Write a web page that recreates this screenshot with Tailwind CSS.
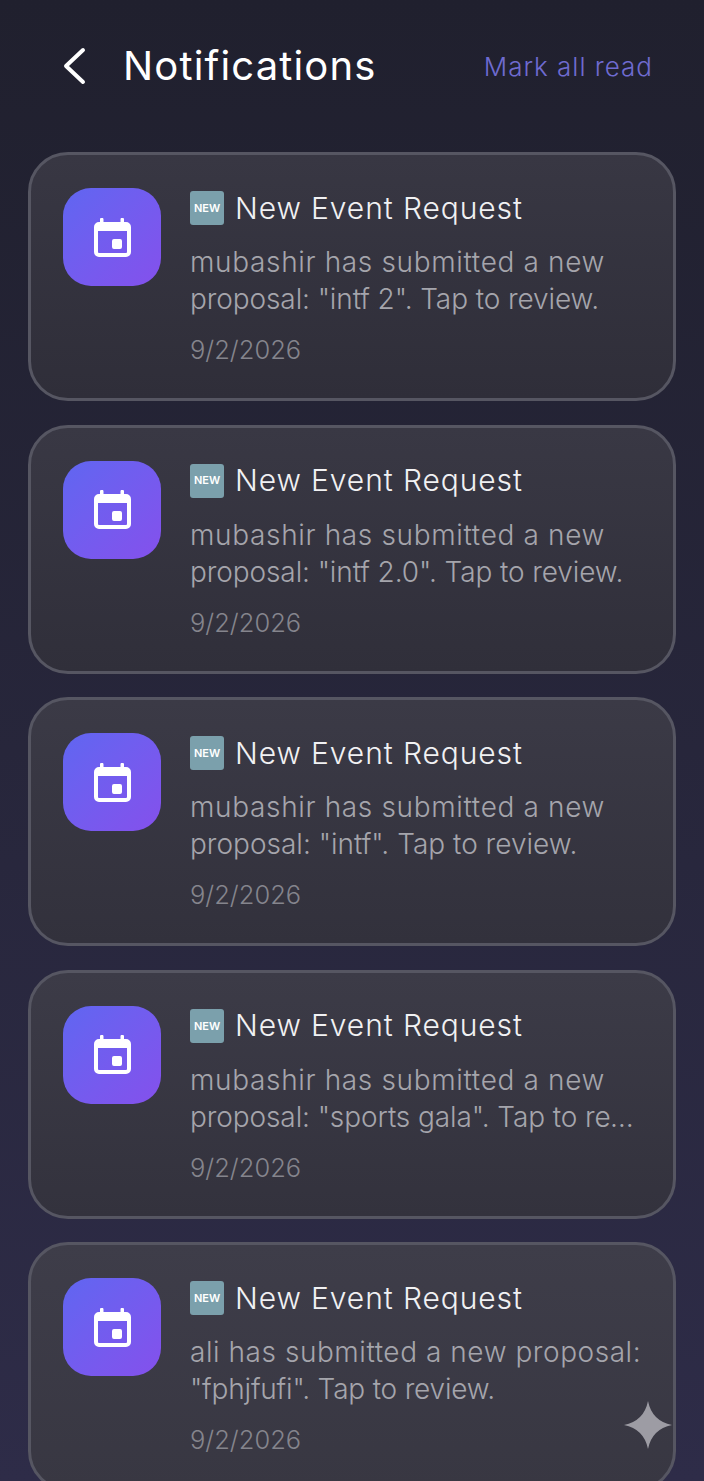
<!DOCTYPE html>
<html lang="en">
<head>
    <meta charset="UTF-8">
    <meta name="viewport" content="width=device-width, initial-scale=1.0">
    <title>Notifications</title>
    <script src="https://cdn.jsdelivr.net/npm/@tailwindcss/browser@4"></script>
</head>
<body class="relative h-[1481px] overflow-hidden bg-gradient-to-b from-[#20202e] to-[#2e2c48] font-['Inter','Noto_Sans',sans-serif]">
    <header class="flex h-[132px] items-center justify-between pl-[62px] pr-[51px]">
        <div class="flex items-center gap-[36px]">
            <svg class="h-[38px] w-[25px]" viewBox="0 0 25 38" fill="none" stroke="#fff" stroke-width="4" stroke-linecap="round" stroke-linejoin="round"><path d="M21 3 4 19l17 16"/></svg>
            <h1 class="text-[40px] font-normal tracking-[1.15px] text-white">Notifications</h1>
        </div>
        <button class="text-[26px] font-light tracking-[1px] text-[#6f6bd0]">Mark all read</button>
    </header>

    <main class="mt-[20px] flex flex-col gap-[23.600px] px-[28px]">
        <article class="flex h-[249px] shrink-0 gap-[29px] rounded-[40px] border-[3px] border-[#565662] bg-gradient-to-b from-[#383743] to-[#2f2e39] pl-[32px] pr-[20px] pt-[33px]">
            <div class="flex h-[98px] w-[98px] shrink-0 items-center justify-center rounded-[28px] bg-gradient-to-br from-[#5f66f1] to-[#8450ec]">
                <svg class="h-[39px] w-[37px]" viewBox="0 0 37 39"><path fill="#fff" fill-rule="evenodd" d="M6 4V1.500a1.500 1.500 0 0 1 3.500 0V4h17V1.500a1.500 1.500 0 0 1 3.500 0V4h2a5 5 0 0 1 5 5v25a5 5 0 0 1-5 5H5a5 5 0 0 1-5-5V9a5 5 0 0 1 5-5zM4 13v21a1 1 0 0 0 1 1h27a1 1 0 0 0 1-1V13zm16 8h6a2 2 0 0 1 2 2v6a2 2 0 0 1-2 2h-6a2 2 0 0 1-2-2v-6a2 2 0 0 1 2-2z"/></svg>
            </div>
            <div class="min-w-0 flex-1">
                <div class="flex h-[40px] items-center gap-[11px]">
                    <span class="flex h-[34px] w-[34px] items-center justify-center rounded-[3px] bg-[#7ba0ac] text-[11px] font-semibold text-white">NEW</span>
                    <h2 class="text-[30px] font-light tracking-[0.9px] text-[#f1f1f3]">New Event Request</h2>
                </div>
                <p class="mt-[16px] text-[28px] font-light leading-[37px] whitespace-nowrap text-[#a5a5ac]">
                    <span class="block tracking-[0.65px]">mubashir has submitted a new</span>
                    <span class="block tracking-[-0.1px]">proposal: "intf 2". Tap to review.</span>
                </p>
                <p class="mt-[13px] text-[25.500px] font-light text-[#85858d]">9/2/2026</p>
            </div>
        </article>
        <article class="flex h-[249px] shrink-0 gap-[29px] rounded-[40px] border-[3px] border-[#565662] bg-gradient-to-b from-[#393844] to-[#302f3a] pl-[32px] pr-[20px] pt-[33px]">
            <div class="flex h-[98px] w-[98px] shrink-0 items-center justify-center rounded-[28px] bg-gradient-to-br from-[#5f66f1] to-[#8450ec]">
                <svg class="h-[39px] w-[37px]" viewBox="0 0 37 39"><path fill="#fff" fill-rule="evenodd" d="M6 4V1.500a1.500 1.500 0 0 1 3.500 0V4h17V1.500a1.500 1.500 0 0 1 3.500 0V4h2a5 5 0 0 1 5 5v25a5 5 0 0 1-5 5H5a5 5 0 0 1-5-5V9a5 5 0 0 1 5-5zM4 13v21a1 1 0 0 0 1 1h27a1 1 0 0 0 1-1V13zm16 8h6a2 2 0 0 1 2 2v6a2 2 0 0 1-2 2h-6a2 2 0 0 1-2-2v-6a2 2 0 0 1 2-2z"/></svg>
            </div>
            <div class="min-w-0 flex-1">
                <div class="flex h-[40px] items-center gap-[11px]">
                    <span class="flex h-[34px] w-[34px] items-center justify-center rounded-[3px] bg-[#7ba0ac] text-[11px] font-semibold text-white">NEW</span>
                    <h2 class="text-[30px] font-light tracking-[0.9px] text-[#f1f1f3]">New Event Request</h2>
                </div>
                <p class="mt-[16px] text-[28px] font-light leading-[37px] whitespace-nowrap text-[#a5a5ac]">
                    <span class="block tracking-[0.65px]">mubashir has submitted a new</span>
                    <span class="block tracking-[-0.1px]">proposal: "intf 2.0". Tap to review.</span>
                </p>
                <p class="mt-[13px] text-[25.500px] font-light text-[#85858d]">9/2/2026</p>
            </div>
        </article>
        <article class="flex h-[249px] shrink-0 gap-[29px] rounded-[40px] border-[3px] border-[#565662] bg-gradient-to-b from-[#3b3a46] to-[#32313c] pl-[32px] pr-[20px] pt-[33px]">
            <div class="flex h-[98px] w-[98px] shrink-0 items-center justify-center rounded-[28px] bg-gradient-to-br from-[#5f66f1] to-[#8450ec]">
                <svg class="h-[39px] w-[37px]" viewBox="0 0 37 39"><path fill="#fff" fill-rule="evenodd" d="M6 4V1.500a1.500 1.500 0 0 1 3.500 0V4h17V1.500a1.500 1.500 0 0 1 3.500 0V4h2a5 5 0 0 1 5 5v25a5 5 0 0 1-5 5H5a5 5 0 0 1-5-5V9a5 5 0 0 1 5-5zM4 13v21a1 1 0 0 0 1 1h27a1 1 0 0 0 1-1V13zm16 8h6a2 2 0 0 1 2 2v6a2 2 0 0 1-2 2h-6a2 2 0 0 1-2-2v-6a2 2 0 0 1 2-2z"/></svg>
            </div>
            <div class="min-w-0 flex-1">
                <div class="flex h-[40px] items-center gap-[11px]">
                    <span class="flex h-[34px] w-[34px] items-center justify-center rounded-[3px] bg-[#7ba0ac] text-[11px] font-semibold text-white">NEW</span>
                    <h2 class="text-[30px] font-light tracking-[0.9px] text-[#f1f1f3]">New Event Request</h2>
                </div>
                <p class="mt-[16px] text-[28px] font-light leading-[37px] whitespace-nowrap text-[#a5a5ac]">
                    <span class="block tracking-[0.65px]">mubashir has submitted a new</span>
                    <span class="block">proposal: "intf". Tap to review.</span>
                </p>
                <p class="mt-[13px] text-[25.500px] font-light text-[#85858d]">9/2/2026</p>
            </div>
        </article>
        <article class="flex h-[249px] shrink-0 gap-[29px] rounded-[40px] border-[3px] border-[#565662] bg-gradient-to-b from-[#3c3b47] to-[#33323d] pl-[32px] pr-[20px] pt-[33px]">
            <div class="flex h-[98px] w-[98px] shrink-0 items-center justify-center rounded-[28px] bg-gradient-to-br from-[#5f66f1] to-[#8450ec]">
                <svg class="h-[39px] w-[37px]" viewBox="0 0 37 39"><path fill="#fff" fill-rule="evenodd" d="M6 4V1.500a1.500 1.500 0 0 1 3.500 0V4h17V1.500a1.500 1.500 0 0 1 3.500 0V4h2a5 5 0 0 1 5 5v25a5 5 0 0 1-5 5H5a5 5 0 0 1-5-5V9a5 5 0 0 1 5-5zM4 13v21a1 1 0 0 0 1 1h27a1 1 0 0 0 1-1V13zm16 8h6a2 2 0 0 1 2 2v6a2 2 0 0 1-2 2h-6a2 2 0 0 1-2-2v-6a2 2 0 0 1 2-2z"/></svg>
            </div>
            <div class="min-w-0 flex-1">
                <div class="flex h-[40px] items-center gap-[11px]">
                    <span class="flex h-[34px] w-[34px] items-center justify-center rounded-[3px] bg-[#7ba0ac] text-[11px] font-semibold text-white">NEW</span>
                    <h2 class="text-[30px] font-light tracking-[0.9px] text-[#f1f1f3]">New Event Request</h2>
                </div>
                <p class="mt-[16px] text-[28px] font-light leading-[37px] whitespace-nowrap text-[#a5a5ac]">
                    <span class="block tracking-[0.65px]">mubashir has submitted a new</span>
                    <span class="block w-[448px] truncate tracking-[-0.1px]">proposal: "sports gala". Tap to review.</span>
                </p>
                <p class="mt-[13px] text-[25.500px] font-light text-[#85858d]">9/2/2026</p>
            </div>
        </article>
        <article class="flex h-[249px] shrink-0 gap-[29px] rounded-[40px] border-[3px] border-[#565662] bg-gradient-to-b from-[#3e3d49] to-[#383742] pl-[32px] pr-[20px] pt-[33px]">
            <div class="flex h-[98px] w-[98px] shrink-0 items-center justify-center rounded-[28px] bg-gradient-to-br from-[#5f66f1] to-[#8450ec]">
                <svg class="h-[39px] w-[37px]" viewBox="0 0 37 39"><path fill="#fff" fill-rule="evenodd" d="M6 4V1.500a1.500 1.500 0 0 1 3.500 0V4h17V1.500a1.500 1.500 0 0 1 3.500 0V4h2a5 5 0 0 1 5 5v25a5 5 0 0 1-5 5H5a5 5 0 0 1-5-5V9a5 5 0 0 1 5-5zM4 13v21a1 1 0 0 0 1 1h27a1 1 0 0 0 1-1V13zm16 8h6a2 2 0 0 1 2 2v6a2 2 0 0 1-2 2h-6a2 2 0 0 1-2-2v-6a2 2 0 0 1 2-2z"/></svg>
            </div>
            <div class="min-w-0 flex-1">
                <div class="flex h-[40px] items-center gap-[11px]">
                    <span class="flex h-[34px] w-[34px] items-center justify-center rounded-[3px] bg-[#7ba0ac] text-[11px] font-semibold text-white">NEW</span>
                    <h2 class="text-[30px] font-light tracking-[0.9px] text-[#f1f1f3]">New Event Request</h2>
                </div>
                <p class="mt-[16px] text-[28px] font-light leading-[37px] whitespace-nowrap text-[#a5a5ac]">
                    <span class="block tracking-[0.55px]">ali has submitted a new proposal:</span>
                    <span class="block tracking-[-0.2px]">"fphjfufi". Tap to review.</span>
                </p>
                <p class="mt-[13px] text-[25.500px] font-light text-[#85858d]">9/2/2026</p>
            </div>
        </article>
    </main>

    <svg class="absolute left-[624px] top-[1401px] h-[48px] w-[48px]" viewBox="0 0 48 48"><path fill="#9d9ca4" d="M24 0Q28 20 48 24 28 28 24 48 20 28 0 24 20 20 24 0z"/></svg>
</body>
</html>
